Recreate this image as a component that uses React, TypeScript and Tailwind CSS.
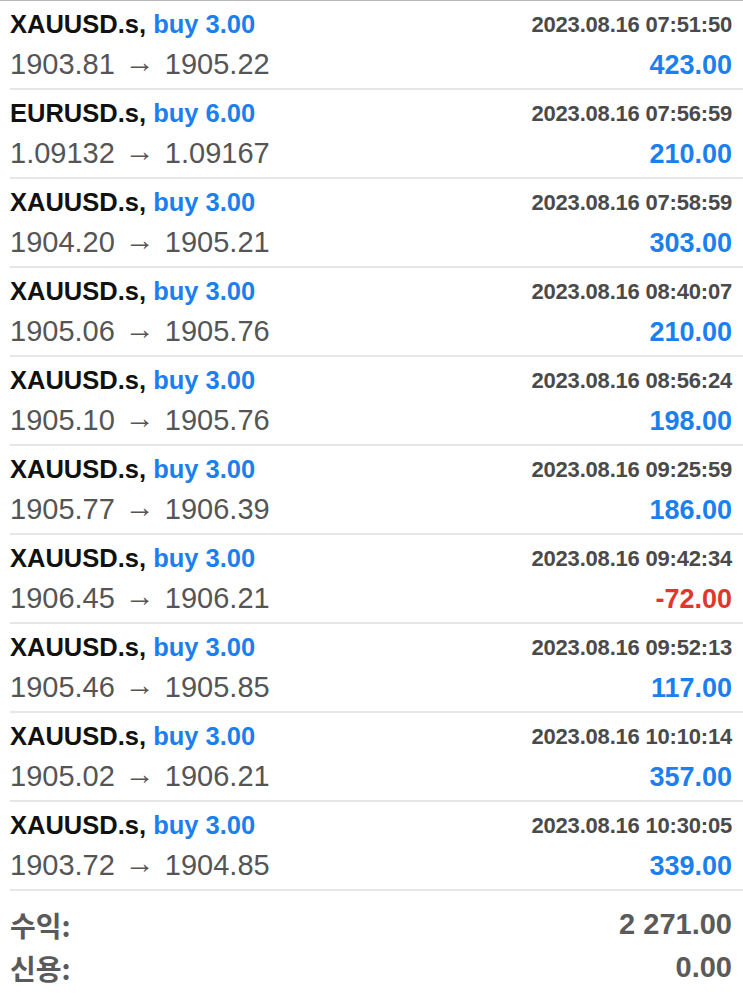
const trades = [
  { sym: "XAUUSD.s", lots: "3.00", open: "1903.81", close: "1905.22", time: "2023.08.16 07:51:50", profit: "423.00" },
  { sym: "EURUSD.s", lots: "6.00", open: "1.09132", close: "1.09167", time: "2023.08.16 07:56:59", profit: "210.00" },
  { sym: "XAUUSD.s", lots: "3.00", open: "1904.20", close: "1905.21", time: "2023.08.16 07:58:59", profit: "303.00" },
  { sym: "XAUUSD.s", lots: "3.00", open: "1905.06", close: "1905.76", time: "2023.08.16 08:40:07", profit: "210.00" },
  { sym: "XAUUSD.s", lots: "3.00", open: "1905.10", close: "1905.76", time: "2023.08.16 08:56:24", profit: "198.00" },
  { sym: "XAUUSD.s", lots: "3.00", open: "1905.77", close: "1906.39", time: "2023.08.16 09:25:59", profit: "186.00" },
  { sym: "XAUUSD.s", lots: "3.00", open: "1906.45", close: "1906.21", time: "2023.08.16 09:42:34", profit: "-72.00" },
  { sym: "XAUUSD.s", lots: "3.00", open: "1905.46", close: "1905.85", time: "2023.08.16 09:52:13", profit: "117.00" },
  { sym: "XAUUSD.s", lots: "3.00", open: "1905.02", close: "1906.21", time: "2023.08.16 10:10:14", profit: "357.00" },
  { sym: "XAUUSD.s", lots: "3.00", open: "1903.72", close: "1904.85", time: "2023.08.16 10:30:05", profit: "339.00" },
];

const summary = [
  { label: "수익:", value: "2 271.00" },
  { label: "신용:", value: "0.00" },
  { label: "입금:", value: "0.00" },
];

function TradeRow({ t }: { t: (typeof trades)[number] }) {
  const loss = t.profit.startsWith("-");
  return (
    <div className="pl-[10px]">
      <div className="flex flex-col border-b-2 border-[#e6e6e6] pt-[3px] pb-[2px] pr-[11px]">
        <div className="flex h-[40px] items-center justify-between">
          <span className="text-[25.5px] font-bold text-[#111111]">
            {t.sym}, <span className="text-[#1b80ef]">buy {t.lots}</span>
          </span>
          <span className="text-[22px] font-bold tracking-[-0.2px] text-[#4a4a4a]">{t.time}</span>
        </div>
        <div className="flex h-[42px] items-center justify-between">
          <span className="flex items-center text-[29px] text-[#555555]">
            {t.open}
            <span className="inline-block w-[50px] -translate-y-[3px] text-center text-[30px] leading-none">→</span>
            {t.close}
          </span>
          <span className={`text-[27px] font-bold ${loss ? "text-[#e0372c]" : "text-[#1b80ef]"}`}>
            {t.profit}
          </span>
        </div>
      </div>
    </div>
  );
}

export default function App() {
  return (
    <div
      className="h-[998px] w-[743px] overflow-hidden border-t border-[#b8b8b8] bg-white"
      style={{ fontFamily: '"Liberation Sans", "Noto Sans CJK KR", sans-serif' }}
    >
      {trades.map((t, i) => (
        <TradeRow key={i} t={t} />
      ))}
      <div className="flex flex-col pt-[12px] pl-[10px] pr-[11px]">
        {summary.map((s) => (
          <div key={s.label} className="flex h-[43px] items-center justify-between text-[#5a5a5a]">
            <span className="text-[28px] font-bold" style={{ fontFamily: '"Noto Sans CJK KR", sans-serif' }}>
              {s.label}
            </span>
            <span className="text-[29px] font-bold">{s.value}</span>
          </div>
        ))}
      </div>
    </div>
  );
}
